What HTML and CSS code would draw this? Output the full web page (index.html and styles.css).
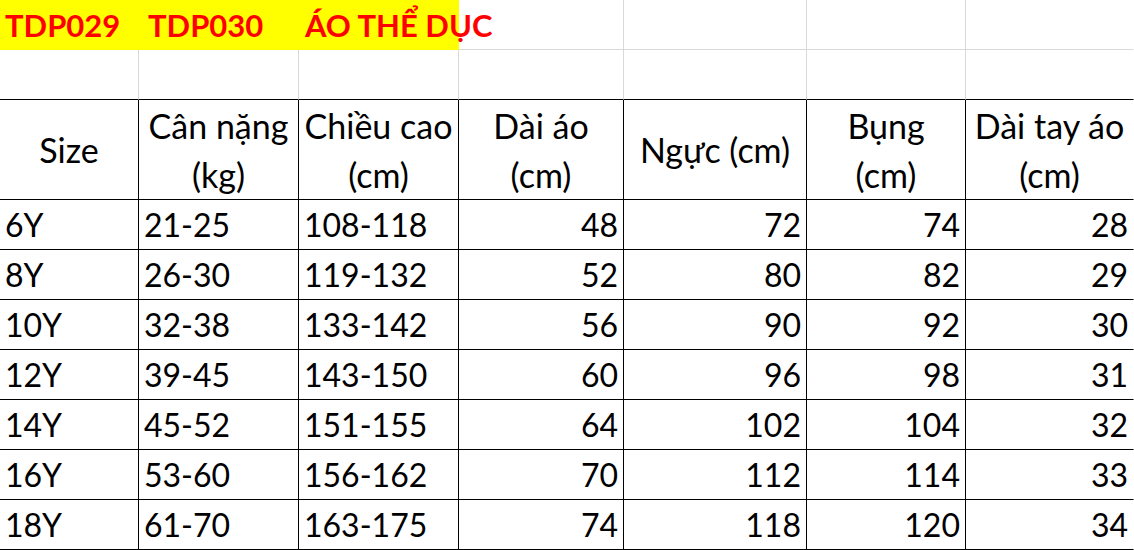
FILE: index.html
```html
<!DOCTYPE html>
<html lang="vi">
<head>
<meta charset="utf-8">
<title>TDP029 TDP030 Áo thể dục</title>
<link rel="stylesheet" href="styles.css">
</head>
<body>
<div class="sheet">
  <div class="c title y t1">TDP029</div>
  <div class="c title y t2">TDP030</div>
  <div class="c title y t3">ÁO THỂ DỤC</div>
  <div class="c g"></div><div class="c g"></div><div class="c g"></div><div class="c g last"></div>

  <div class="c g e"></div><div class="c g e"></div><div class="c g e"></div><div class="c g e"></div><div class="c g e"></div><div class="c g e"></div><div class="c g e last"></div>

  <div class="c h">Size</div>
  <div class="c h">Cân nặng<br>(kg)</div>
  <div class="c h">Chiều cao<br>(cm)</div>
  <div class="c h">Dài áo<br>(cm)</div>
  <div class="c h">Ngực (cm)</div>
  <div class="c h">Bụng<br>(cm)</div>
  <div class="c h last">Dài tay áo<br>(cm)</div>

  <div class="c d l">6Y</div><div class="c d l">21-25</div><div class="c d l">108-118</div><div class="c d r">48</div><div class="c d r">72</div><div class="c d r">74</div><div class="c d r last">28</div>
  <div class="c d l">8Y</div><div class="c d l">26-30</div><div class="c d l">119-132</div><div class="c d r">52</div><div class="c d r">80</div><div class="c d r">82</div><div class="c d r last">29</div>
  <div class="c d l">10Y</div><div class="c d l">32-38</div><div class="c d l">133-142</div><div class="c d r">56</div><div class="c d r">90</div><div class="c d r">92</div><div class="c d r last">30</div>
  <div class="c d l">12Y</div><div class="c d l">39-45</div><div class="c d l">143-150</div><div class="c d r">60</div><div class="c d r">96</div><div class="c d r">98</div><div class="c d r last">31</div>
  <div class="c d l">14Y</div><div class="c d l">45-52</div><div class="c d l">151-155</div><div class="c d r">64</div><div class="c d r">102</div><div class="c d r">104</div><div class="c d r last">32</div>
  <div class="c d l">16Y</div><div class="c d l">53-60</div><div class="c d l">156-162</div><div class="c d r">70</div><div class="c d r">112</div><div class="c d r">114</div><div class="c d r last">33</div>
  <div class="c d l">18Y</div><div class="c d l">61-70</div><div class="c d l">163-175</div><div class="c d r">74</div><div class="c d r">118</div><div class="c d r">120</div><div class="c d r last">34</div>
</div>
</body>
</html>
```

FILE: styles.css
```css
html, body {
  margin: 0;
  padding: 0;
  background: #ffffff;
}

body {
  font-family: Lato, "Open Sans", "Noto Sans", sans-serif;
  color: #000000;
  width: 1134px;
  height: 550px;
  overflow: hidden;
}

.sheet {
  display: grid;
  grid-template-columns: 139px 160px 160px 165px 183px 159px 168px;
  grid-template-rows: 50px 50px 100px repeat(7, 50px);
}

.c {
  box-sizing: border-box;
  border-right: 1px solid #000000;
  border-bottom: 1px solid #000000;
  font-size: 32px;
  white-space: nowrap;
  min-width: 0;
}

.c.last {
  border-right-color: transparent;
}

.g {
  border-right-color: #d9d9d9;
  border-bottom-color: #d9d9d9;
}

.g.e {
  border-bottom-color: #000000;
}

.y {
  background: #ffff00;
  border-right-color: transparent;
  border-bottom-color: transparent;
}

.title {
  color: #ff0000;
  font-weight: 700;
  font-size: 31px;
  display: flex;
  align-items: center;
  overflow: visible;
  position: relative;
  z-index: 1;
}

.t1 { padding-left: 5px; }
.t2 { padding-left: 9px; }
.t3 { padding-left: 6px; }

.h {
  display: flex;
  align-items: center;
  justify-content: center;
  text-align: center;
  font-size: 34px;
  line-height: 49px;
}

.d {
  display: flex;
  align-items: center;
}

.d.l {
  justify-content: flex-start;
  padding-left: 5px;
}

.d.r {
  justify-content: flex-end;
  padding-right: 5px;
}
```
